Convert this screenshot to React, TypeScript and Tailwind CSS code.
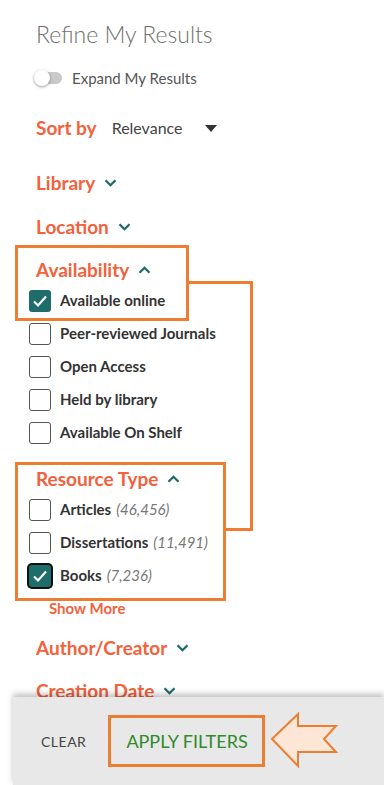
import React from 'react';

const font = { fontFamily: 'Lato, "Source Sans Pro", "Liberation Sans", sans-serif' };

function Chevron({ up }: { up?: boolean }) {
  return (
    <svg width="13" height="8" viewBox="0 0 13 8" className="ml-[9px]">
      <path
        d={up ? 'M1.5 6.8 L6.5 1.8 L11.5 6.8' : 'M1.5 1.2 L6.5 6.2 L11.5 1.2'}
        fill="none"
        stroke="#1d6b69"
        strokeWidth="2.3"
      />
    </svg>
  );
}

function Heading({ label, up, className = '' }: { label: string; up?: boolean; className?: string }) {
  return (
    <div className={`flex items-center h-[28px] pl-[36px] ${className}`}>
      <span className="text-[19px] font-bold text-[#f4613b]">{label}</span>
      <Chevron up={up} />
    </div>
  );
}

function Box({ checked, focus }: { checked?: boolean; focus?: boolean }) {
  if (checked) {
    return (
      <div
        className={`w-[22px] h-[22px] rounded-[3px] bg-[#1f6d6b] flex items-center justify-center ${
          focus ? 'ring-2 ring-[#111]' : ''
        }`}
      >
        <svg width="16" height="14" viewBox="0 0 16 14">
          <path d="M2 7.5 L6 11.5 L14 2.5" fill="none" stroke="#fff" strokeWidth="2.2" />
        </svg>
      </div>
    );
  }
  return <div className="w-[22px] h-[22px] rounded-[3px] border-[1.5px] border-[#555] bg-white" />;
}

function Row({ label, count, checked, focus }: { label: string; count?: string; checked?: boolean; focus?: boolean }) {
  return (
    <div className="flex items-center h-[33px] pl-[29px]">
      <Box checked={checked} focus={focus} />
      <span className="ml-[9px] text-[15px] font-bold text-[#333]">{label}</span>
      {count && <span className="ml-[5px] text-[15px] italic text-[#777]">({count})</span>}
    </div>
  );
}

export default function App() {
  return (
    <div className="relative w-[384px] h-[785px] bg-white overflow-hidden" style={font}>
      <div className="pt-[14px]">
        <div className="h-[40px] flex items-center pl-[36px] text-[23px] font-light text-[#707070]">
          Refine My Results
        </div>

        <div className="mt-[10px] h-[28px] flex items-center pl-[34px]">
          <div className="relative w-[28px] h-[16px] flex items-center">
            <div className="ml-[2px] w-[26px] h-[12px] rounded-full bg-[#c9c9c9]" />
            <div className="absolute left-0 top-0 w-[16px] h-[16px] rounded-full bg-white shadow-[0_1px_3px_rgba(0,0,0,0.4)]" />
          </div>
          <span className="ml-[10px] text-[15px] text-[#555]">Expand My Results</span>
        </div>

        <div className="mt-[22px] h-[28px] flex items-center pl-[36px]">
          <span className="text-[19px] font-bold text-[#f4613b]">Sort by</span>
          <span className="ml-[15px] text-[16px] text-[#444]">Relevance</span>
          <svg width="12" height="7" viewBox="0 0 12 7" className="ml-[22px]">
            <path d="M0 0 L12 0 L6 7 Z" fill="#333" />
          </svg>
        </div>

        <Heading label="Library" className="mt-[27px]" />
        <Heading label="Location" className="mt-[16px]" />
        <Heading label="Availability" up className="mt-[15px]" />

        <Row label="Available online" checked />
        <Row label="Peer-reviewed Journals" />
        <Row label="Open Access" />
        <Row label="Held by library" />
        <Row label="Available On Shelf" />

        <Heading label="Resource Type" up className="mt-[16px]" />
        <Row label="Articles" count="46,456" />
        <Row label="Dissertations" count="11,491" />
        <Row label="Books" count="7,236" checked focus />

        <div className="mt-[4px] h-[24px] flex items-center pl-[49px] text-[15px] font-bold text-[#f4613b]">
          Show More
        </div>

        <Heading label="Author/Creator" className="mt-[14px]" />
        <Heading label="Creation Date" className="mt-[15px]" />
      </div>

      {/* annotation boxes */}
      <div className="absolute left-[15px] top-[245px] w-[174px] h-[76px] border-[3px] border-[#ed7d31]" />
      <div className="absolute left-[186px] top-[281px] w-[67px] h-[250px] border-t-[3px] border-r-[3px] border-[#ed7d31]" />
      <div className="absolute left-[224px] top-[528px] w-[29px] h-[3px] bg-[#ed7d31]" />
      <div className="absolute left-[15px] top-[462px] w-[211px] h-[139px] border-[3px] border-[#ed7d31]" />

      {/* bottom action bar */}
      <div className="absolute left-[13px] right-0 top-[697px] bottom-0 bg-[#e8e8e8] shadow-[0_-3px_6px_rgba(0,0,0,0.25)] flex items-center">
        <span className="ml-[28px] text-[14px] tracking-[0.5px] text-[#444]">CLEAR</span>
        <div className="ml-[22px] w-[157px] h-[52px] border-[3px] border-[#ed7d31] flex items-center pl-[15px]">
          <span className="text-[18px] text-[#2f8a2a]">APPLY FILTERS</span>
        </div>
        <svg width="72" height="58" viewBox="0 0 72 58" className="ml-[4px]">
          <path
            d="M3 27 L29 2 L29 14 L67 14 L55 27 L67 40 L29 40 L29 54 Z"
            fill="#fde6d6"
            stroke="#ed7d31"
            strokeWidth="2"
            strokeLinejoin="miter"
          />
        </svg>
      </div>
    </div>
  );
}
